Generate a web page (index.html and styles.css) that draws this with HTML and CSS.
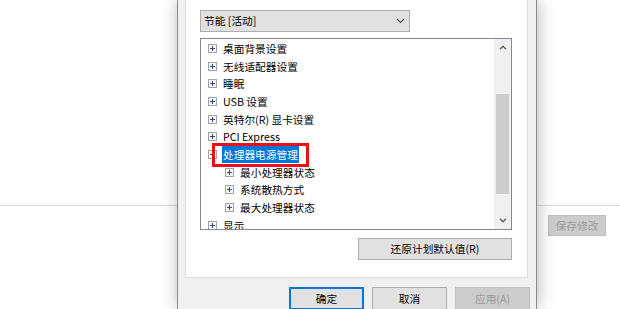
FILE: index.html
```html
<!DOCTYPE html>
<html lang="zh-CN">
<head>
<meta charset="utf-8">
<title>电源选项</title>
<link rel="stylesheet" href="styles.css">
</head>
<body>
<svg class="defs" width="0" height="0" aria-hidden="true">
  <defs>
    <symbol id="plus" viewBox="0 0 9 9">
      <rect x="0.5" y="0.5" width="8" height="8" fill="#f6f6f6" stroke="#a3a3a3"/>
      <path d="M2 4.5h5M4.5 2v5" stroke="#2c4a8c" stroke-width="1"/>
    </symbol>
    <symbol id="minus" viewBox="0 0 9 9">
      <rect x="0.5" y="0.5" width="8" height="8" fill="#f6f6f6" stroke="#a3a3a3"/>
      <path d="M2 4.5h5" stroke="#2c4a8c" stroke-width="1"/>
    </symbol>
  </defs>
</svg>
<div class="screen">
  <div class="bg-left"><div class="bg-top"></div></div>

  <div class="dialog">
    <div class="panel">
      <div class="select">
        <span>节能 [活动]</span>
        <svg class="chev" width="9" height="6" viewBox="0 0 9 6"><path d="M1 1l3.5 3.5L8 1" fill="none" stroke="#505050" stroke-width="1.1"/></svg>
      </div>
      <div class="tree">
        <div class="tree-list">
          <div class="row"><svg class="exp"><use href="#plus"/></svg><span class="label">桌面背景设置</span></div>
          <div class="row"><svg class="exp"><use href="#plus"/></svg><span class="label">无线适配器设置</span></div>
          <div class="row"><svg class="exp"><use href="#plus"/></svg><span class="label">睡眠</span></div>
          <div class="row"><svg class="exp"><use href="#plus"/></svg><span class="label">USB 设置</span></div>
          <div class="row"><svg class="exp"><use href="#plus"/></svg><span class="label">英特尔(R) 显卡设置</span></div>
          <div class="row"><svg class="exp"><use href="#plus"/></svg><span class="label">PCI Express</span></div>
          <div class="row"><svg class="exp"><use href="#minus"/></svg><span class="label selected">处理器电源管理</span><div class="mark"></div></div>
          <div class="row child"><svg class="exp"><use href="#plus"/></svg><span class="label">最小处理器状态</span></div>
          <div class="row child"><svg class="exp"><use href="#plus"/></svg><span class="label">系统散热方式</span></div>
          <div class="row child"><svg class="exp"><use href="#plus"/></svg><span class="label">最大处理器状态</span></div>
          <div class="row"><svg class="exp"><use href="#plus"/></svg><span class="label">显示</span></div>
        </div>
        <div class="scrollbar">
          <div class="sb-btn"><svg width="8" height="5" viewBox="0 0 8 5"><path d="M1 4.2l3-3 3 3" fill="none" stroke="#606060" stroke-width="1.4"/></svg></div>
          <div class="sb-track"><div class="sb-thumb"></div></div>
          <div class="sb-btn"><svg width="8" height="5" viewBox="0 0 8 5"><path d="M1 0.8l3 3 3-3" fill="none" stroke="#606060" stroke-width="1.4"/></svg></div>
        </div>
      </div>
      <div class="restore-row"><button class="btn restore">还原计划默认值(R)</button></div>
    </div>
    <div class="footer">
      <button class="btn default">确定</button>
      <button class="btn">取消</button>
      <button class="btn disabled">应用(A)</button>
    </div>
  </div>

  <div class="bg-right">
    <div class="bg-top"></div>
    <button class="btn disabled save">保存修改</button>
  </div>
</div>
</body>
</html>
```

FILE: styles.css
```css
* { box-sizing: border-box; }
html, body { margin: 0; padding: 0; }
body {
  width: 620px;
  height: 309px;
  overflow: hidden;
  background: #ffffff;
  font-family: "Noto Sans CJK SC", "Microsoft YaHei", sans-serif;
  font-size: 10.7px;
  color: #000;
}
.defs { position: absolute; width: 0; height: 0; }
.screen { display: flex; height: 309px; }

.bg-left { width: 177px; flex: none; }
.bg-right { width: 83px; flex: none; }
.bg-top { height: 206px; border-bottom: 1px solid #dadada; }

.dialog {
  width: 360px;
  flex: none;
  height: 309px;
  background: #f0f0f0;
  border-left: 1px solid #8a8a8a;
  border-right: 1px solid #8a8a8a;
  box-shadow: 1px 0 16px rgba(0, 0, 0, 0.28);
  padding: 0 8px 0 7px;
  display: flex;
  flex-direction: column;
  position: relative;
  z-index: 1;
}

.panel {
  width: 343px;
  height: 278px;
  flex: none;
  background: #fff;
  border: 1px solid #dcdcdc;
  border-top: none;
  padding: 10px 15px 0 14px;
  display: flex;
  flex-direction: column;
}

.select {
  width: 210px;
  height: 22px;
  background: #e1e1e1;
  border: 1px solid #adadad;
  display: flex;
  align-items: center;
  justify-content: space-between;
  padding: 0 4px 0 3px;
  line-height: 20px;
}
.chev { display: block; }

.tree {
  margin-top: 6px;
  width: 312px;
  height: 192px;
  border: 1px solid #828790;
  display: flex;
  overflow: hidden;
}
.tree-list {
  flex: 1;
  padding-top: 0.5px;
  overflow: hidden;
}
.row {
  height: 17.7px;
  display: flex;
  align-items: center;
  padding-left: 7px;
  position: relative;
  white-space: nowrap;
}
.row.child { padding-left: 24px; }
.exp { width: 9px; height: 9px; flex: none; display: block; }
.label {
  margin-left: 5px;
  padding: 0 1px;
  line-height: 17px;
  height: 17px;
}
.label.selected { background: #0078d7; color: #fff; }
.mark {
  position: absolute;
  left: 11px;
  top: -3px;
  width: 97px;
  height: 24px;
  border: 3px solid #e8111b;
}

.scrollbar {
  width: 17px;
  flex: none;
  background: #f0f0f0;
  display: flex;
  flex-direction: column;
}
.sb-btn {
  height: 17px;
  flex: none;
  display: flex;
  align-items: center;
  justify-content: center;
}
.sb-btn svg { display: block; }
.sb-track { flex: 1; }
.sb-thumb {
  margin: 38px 2px 0 2px;
  height: 100px;
  background: #cdcdcd;
}

.restore-row {
  margin-top: 8px;
  width: 312px;
  display: flex;
  justify-content: flex-end;
}

.btn {
  font-family: inherit;
  font-size: 10.7px;
  color: #000;
  background: #e1e1e1;
  border: 1px solid #adadad;
  height: 23px;
  padding: 0;
  margin: 0;
  line-height: 20px;
  text-align: center;
}
.restore { width: 154px; height: 22px; }

.footer {
  margin-top: 9px;
  margin-right: -2px;
  display: flex;
  justify-content: flex-end;
  gap: 8px;
}
.footer .btn { width: 75px; }
.btn.default {
  border: 1px solid #0078d7;
  box-shadow: inset 0 0 0 1px #0078d7;
}
.btn.disabled {
  background: #cccccc;
  border-color: #bfbfbf;
  color: #9a9a9a;
}
.save {
  margin: 9px 0 0 11px;
  width: 58px;
  height: 21px;
}
```
